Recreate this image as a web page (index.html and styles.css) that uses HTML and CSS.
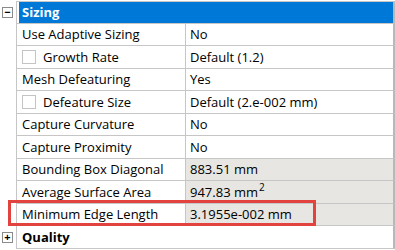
FILE: index.html
```html
<!DOCTYPE html>
<html lang="en">
<head>
    <meta charset="UTF-8" />
    <title>Sizing</title>
    <link rel="stylesheet" href="styles.css">
</head>
<body>
    <div class="panel">
        <div class="row cat-row">
            <div class="gutter"><span class="toggle">&minus;</span></div>
            <div class="cat head">Sizing</div>
        </div>
        <div class="row">
            <div class="gutter"></div>
            <div class="cell label">Use Adaptive Sizing</div>
            <div class="cell value">No</div>
        </div>
        <div class="row">
            <div class="gutter"></div>
            <div class="cell label"><span class="check"></span>Growth Rate</div>
            <div class="cell value">Default (1.2)</div>
        </div>
        <div class="row">
            <div class="gutter"></div>
            <div class="cell label">Mesh Defeaturing</div>
            <div class="cell value">Yes</div>
        </div>
        <div class="row">
            <div class="gutter"></div>
            <div class="cell label"><span class="check"></span>Defeature Size</div>
            <div class="cell value">Default (2.e-002 mm)</div>
        </div>
        <div class="row">
            <div class="gutter"></div>
            <div class="cell label">Capture Curvature</div>
            <div class="cell value">No</div>
        </div>
        <div class="row">
            <div class="gutter"></div>
            <div class="cell label">Capture Proximity</div>
            <div class="cell value">No</div>
        </div>
        <div class="row">
            <div class="gutter"></div>
            <div class="cell label">Bounding Box Diagonal</div>
            <div class="cell value readonly">883.51 mm</div>
        </div>
        <div class="row">
            <div class="gutter"></div>
            <div class="cell label">Average Surface Area</div>
            <div class="cell value readonly"><span>947.83 mm<sup>2</sup></span></div>
        </div>
        <div class="row">
            <div class="gutter"></div>
            <div class="cell label">Minimum Edge Length</div>
            <div class="cell value readonly">3.1955e-002 mm</div>
        </div>
        <div class="row cat-row">
            <div class="gutter"><span class="toggle">+</span></div>
            <div class="cat">Quality</div>
        </div>
        <div class="highlight"></div>
    </div>
</body>
</html>
```

FILE: styles.css
```css
body {
    margin: 0;
    font-family: 'Open Sans', 'Noto Sans', sans-serif;
    font-size: 13px;
    color: #000;
    background: #fff;
}
.panel {
    position: relative;
    width: 395px;
    padding-top: 1px;
}
.row {
    display: flex;
    height: 22.5px;
}
.gutter {
    width: 16px;
    flex: none;
    display: flex;
    align-items: center;
    justify-content: center;
}
.toggle {
    width: 9px;
    height: 9px;
    border: 1px solid #8a8a8a;
    font-size: 11px;
    line-height: 8px;
    text-align: center;
    font-weight: 700;
    color: #000;
    margin-left: -1px;
}
.cell, .cat {
    box-sizing: border-box;
    height: 100%;
    display: flex;
    align-items: center;
    border-left: 1px solid #c6c6c6;
    border-bottom: 1px solid #c6c6c6;
    white-space: nowrap;
}
.label {
    width: 169px;
    flex: none;
    padding-left: 5px;
}
.value {
    flex: 1;
    padding-left: 4px;
    border-right: 2px solid #b8b8b8;
}
.readonly {
    background: #e7e6e2;
}
.cat {
    flex: 1;
    padding-left: 5px;
    font-weight: 700;
    border-right: 2px solid #b8b8b8;
}
.head {
    background: #0078d7;
    color: #fff;
    border-top: 1px solid #c6c6c6;
    box-shadow: inset 2px 0 0 #fff;
}
.check {
    width: 12px;
    height: 12px;
    border: 1px solid #c4c4c4;
    background: #fff;
    margin-right: 7px;
}
sup {
    font-size: 10px;
    line-height: 0;
    vertical-align: 6px;
    margin-left: 1px;
}
.highlight {
    position: absolute;
    left: 8px;
    top: 200px;
    width: 302px;
    height: 20px;
    border: 3px solid #e2433f;
}
```
